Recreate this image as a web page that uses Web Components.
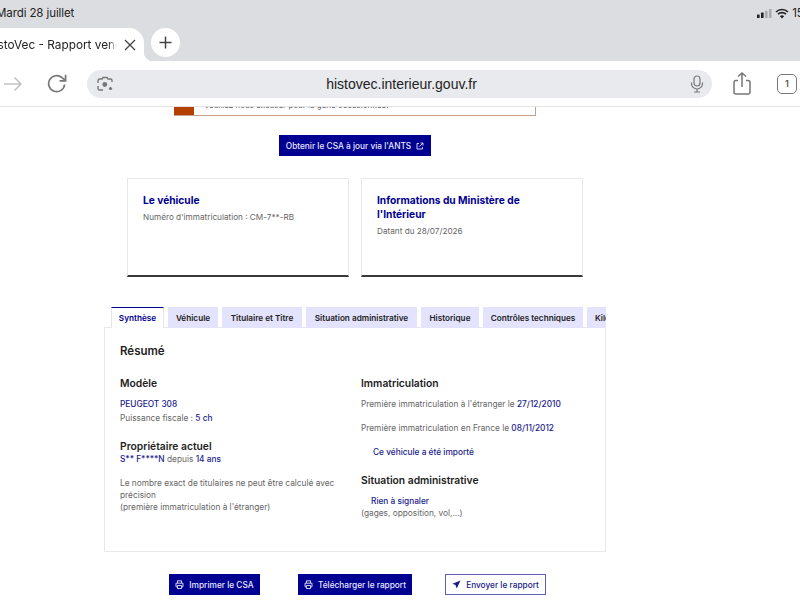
<!DOCTYPE html>
<html lang="fr">
<head>
<meta charset="utf-8">
<title>HistoVec - Rapport vendeur</title>
<style>
  html, body { margin: 0; height: 100%; overflow: hidden; background: #fff; }
  body { font-family: Inter, "Noto Sans", sans-serif; width: 800px; height: 600px; }
  main { width: 710px; display: flex; flex-direction: column; align-items: center; }
  .cards { display: flex; gap: 12px; margin-top: 22px; }
</style>
</head>
<body>
<browser-chrome></browser-chrome>
<main>
  <alert-box>Veuillez nous excuser pour la gêne occasionnée.</alert-box>
  <action-button icon="external" style="margin-top:19px">Obtenir le CSA à jour via l'ANTS</action-button>
  <div class="cards">
    <info-card heading="Le véhicule">Numéro d'immatriculation : CM-7**-RB</info-card>
    <info-card heading="Informations du Ministère de l'Intérieur">Datant du 28/07/2026</info-card>
  </div>
  <report-tabs></report-tabs>
  <report-actions></report-actions>
</main>

<script>
class BrowserChrome extends HTMLElement {
    constructor() {
        super();
        this.attachShadow({ mode: 'open' });
    }

    connectedCallback() {
        this.shadowRoot.innerHTML = `
        <style>
            :host { display: block; position: relative; z-index: 2; background: #fff; border-bottom: 1px solid #e4e4e6; color: #222; }
            .top { background: #dcdde1; height: 61px; overflow: hidden; }
            .status { height: 28px; display: flex; align-items: center; justify-content: space-between; font-size: 11.500px; letter-spacing: -.1px; margin: 0 -21px 0 -4px; padding-bottom: 2px; box-sizing: border-box; }
            .status-right { display: flex; align-items: center; gap: 3px; }
            .tabs { display: flex; align-items: flex-start; gap: 7px; height: 33px; }
            .tab { position: relative; width: 164px; margin-left: -20px; height: 33px; background: #fff; border-top-right-radius: 15px; display: flex; align-items: center; padding: 0 8px 0 6px; box-sizing: border-box; font-size: 11.800px; }
            .tab::after { content: ""; position: absolute; left: 100%; bottom: 0; width: 9px; height: 9px; background: radial-gradient(circle at 100% 0, transparent 9px, #fff 9.500px); }
            .tab-title { flex: 1; white-space: nowrap; overflow: hidden; margin-right: 7px; -webkit-mask-image: linear-gradient(to left, transparent 0, #000 9px); }
            .plus { width: 29px; height: 29px; border-radius: 50%; background: #fff; display: flex; align-items: center; justify-content: center; }
            .bar { height: 45px; display: flex; align-items: center; }
            .icon-slot { display: flex; align-items: center; justify-content: center; }
            .url { width: 625px; height: 28px; border-radius: 14px; background: #e9eaee; display: flex; align-items: center; justify-content: space-between; padding: 0 8px 0 10px; box-sizing: border-box; font-family: "Liberation Sans", sans-serif; font-size: 14px; margin-left: 13px; margin-right: 15px; }
        </style>
        <div class="top">
            <div class="status">
                <span>Mardi 28 juillet</span>
                <span class="status-right">
                    <svg width="15" height="9" viewBox="0 0 17 10"><rect x="0" y="6" width="3" height="4" rx=".6" fill="#222"/><rect x="4.500" y="4" width="3" height="6" rx=".6" fill="#222"/><rect x="9" y="2" width="3" height="8" rx=".6" fill="#aaa"/><rect x="13.500" y="0" width="3" height="10" rx=".6" fill="#aaa"/></svg>
                    <svg width="14" height="11" viewBox="0 0 14 11"><path d="M1 4a8.600 8.600 0 0 1 12 0M3 6.200a5.800 5.800 0 0 1 8 0" fill="none" stroke="#222" stroke-width="1.600"/><path d="M7 10.600 4.900 8.300a3 3 0 0 1 4.200 0z" fill="#222"/></svg>
                    <span>15:02</span>
                </span>
            </div>
            <div class="tabs">
                <div class="tab">
                    <div class="tab-title">HistoVec - Rapport vendeur</div>
                    <svg width="12" height="12" viewBox="0 0 12 12"><path d="M1 1l10 10M11 1 1 11" stroke="#444" stroke-width="1.300" fill="none"/></svg>
                </div>
                <div class="plus">
                    <svg width="13" height="13" viewBox="0 0 13 13"><path d="M6.500 .5v12M.5 6.500h12" stroke="#444" stroke-width="1.500" fill="none"/></svg>
                </div>
            </div>
        </div>
        <div class="bar">
            <div class="icon-slot" style="width:26px;margin-right:14px">
                <svg width="20" height="16" viewBox="0 0 20 16"><path d="M1 8h17M11.500 1.500 18 8l-6.500 6.500" fill="none" stroke="#c2c2c4" stroke-width="1.500"/></svg>
            </div>
            <div class="icon-slot" style="width:34px">
                <svg width="20" height="20" viewBox="0 0 20 20"><path d="M17.600 10.500A8 8 0 1 1 15 3.700L18 6" fill="none" stroke="#777" stroke-width="1.700"/><path d="M18.600 .8v6h-6" fill="none" stroke="#777" stroke-width="1.700"/></svg>
            </div>
            <div class="url">
                <svg width="16" height="16" viewBox="0 0 16 16"><path d="M1 7V4.500A1.500 1.500 0 0 1 2.500 3H5l1-1.500h4L11 3h2.500A1.500 1.500 0 0 1 15 4.500V6M1 10v2.500A1.500 1.500 0 0 0 2.500 14H6" fill="none" stroke="#777" stroke-width="1.400"/><circle cx="7.800" cy="8.500" r="2.400" fill="#777"/><circle cx="13.500" cy="12.500" r="1.600" fill="#777"/></svg>
                <span>histovec.interieur.gouv.fr</span>
                <svg width="14" height="18" viewBox="0 0 14 18"><rect x="4" y="1" width="6" height="10" rx="3" fill="none" stroke="#777" stroke-width="1.200"/><path d="M1.500 7.500v1a5.500 5.500 0 0 0 11 0v-1M7 14v3M4 17h6" fill="none" stroke="#777" stroke-width="1.200"/></svg>
            </div>
            <div class="icon-slot" style="width:30px;margin-right:20px">
                <svg width="18" height="23" viewBox="0 0 18 23"><path d="M5 8.500H3a2 2 0 0 0-2 2V20a2 2 0 0 0 2 2h12a2 2 0 0 0 2-2v-9.500a2 2 0 0 0-2-2h-2M9 15V1M5 4.500 9 1l4 3.500" fill="none" stroke="#777" stroke-width="1.500"/></svg>
            </div>
            <div class="icon-slot" style="width:20px;height:20px;border:1.500px solid #777;border-radius:5px;font-size:9px;font-weight:600;color:#555;box-sizing:border-box">1</div>
        </div>`;
    }
}

class AlertBox extends HTMLElement {
    constructor() {
        super();
        this.attachShadow({ mode: 'open' });
    }

    connectedCallback() {
        this.shadowRoot.innerHTML = `
        <style>
            :host { display: flex; width: 362px; height: 25px; margin-top: -16px; box-sizing: border-box; border: 1px solid #c9a08e; border-left: 0; }
            .bar { width: 20px; background: #b34000; flex: none; }
            .text { padding: 6px 0 0 10px; font-size: 8px; line-height: 14px; color: #555; white-space: nowrap; }
        </style>
        <div class="bar"></div>
        <div class="text"><slot></slot></div>`;
    }
}

// Bouton plein ou bordé, avec une petite icône
const BUTTON_ICONS = {
    external: `<svg width="8" height="8" viewBox="0 0 8 8"><path d="M3 1.500H1v5.500h5.500V5M4.500 1h2.500v2.500M7 1 3.500 4.500" fill="none" stroke="currentColor" stroke-width=".9"/></svg>`,
    print: `<svg width="9" height="9" viewBox="0 0 9 9"><path d="M2.500 3V.8h4V3M2.500 6.800H1V3.200h7v3.600H6.500M2.500 5.500h4v3h-4z" fill="none" stroke="currentColor" stroke-width=".9"/></svg>`,
    send: `<svg width="9" height="9" viewBox="0 0 9 9"><path d="M8.500 .5 .5 3.800l3 1.300L8.500 .5 4.700 8.500 3.500 5.100z" fill="currentColor"/></svg>`
};

class ActionButton extends HTMLElement {
    constructor() {
        super();
        this.attachShadow({ mode: 'open' });
    }

    connectedCallback() {
        const icon = BUTTON_ICONS[this.getAttribute('icon')];
        const before = this.getAttribute('icon') != 'external';
        this.shadowRoot.innerHTML = `
        <style>
            :host { display: inline-flex; flex: none; align-items: center; justify-content: center; gap: 5px; height: 21px; box-sizing: border-box; background: #000091; color: #e8e8ff; font-size: 8.300px; font-weight: 500; white-space: nowrap; }
            :host([outline]) { background: #fff; color: #1a1a8c; border: 1px solid #5f5fb0; }
            svg { display: block; flex: none; }
        </style>
        ${before ? icon : ''}<span><slot></slot></span>${before ? '' : icon}`;
        this.style.width = (this.getAttribute('w') || 152) + 'px';
    }
}

class InfoCard extends HTMLElement {
    constructor() {
        super();
        this.attachShadow({ mode: 'open' });
    }

    connectedCallback() {
        this.shadowRoot.innerHTML = `
        <style>
            :host { display: block; width: 222px; height: 99px; box-sizing: border-box; border: 1px solid #e8e8e8; border-bottom: 2px solid #3a3a3a; padding: 14px 15px 0; }
            h3 { margin: 0; font-size: 10.200px; line-height: 14px; font-weight: 700; color: #000091; }
            p { margin: 4px 0 0; font-size: 8.200px; line-height: 12px; color: #666; }
        </style>
        <h3>${this.getAttribute('heading')}</h3>
        <p><slot></slot></p>`;
    }
}

class ReportTabs extends HTMLElement {
    constructor() {
        super();
        this.attachShadow({ mode: 'open' });
    }

    connectedCallback() {
        const labels = ['Synthèse', 'Véhicule', 'Titulaire et Titre', 'Situation administrative', 'Historique', 'Contrôles techniques', 'Kilométrage'];
        const widths = [53, 50, 80, 111, 58, 100, 60];
        const tabs = labels.map((label, i) =>
            `<div class="tab ${i == 0 ? 'active' : ''}" style="flex-basis:${widths[i]}px">${label}</div>`).join('');
        this.shadowRoot.innerHTML = `
        <style>
            :host { display: block; width: 502px; margin-top: 30px; }
            .list { display: flex; gap: 4px; height: 21px; padding-left: 7px; overflow: hidden; position: relative; z-index: 1; margin-bottom: -1px; }
            .tab { flex: none; box-sizing: border-box; display: flex; align-items: center; justify-content: center; background: #e3e3fd; color: #222; font-size: 8.200px; font-weight: 600; white-space: nowrap; overflow: hidden; }
            .tab:last-child { justify-content: flex-start; padding-left: 8px; }
            .tab.active { background: #fff; color: #000091; border-top: 1px solid #000091; border-left: 1px solid #e5e5e5; border-right: 1px solid #e5e5e5; }
            .panel { box-sizing: border-box; height: 225px; border: 1px solid #e8e8e8; padding: 16px 15px 0; color: #666; font-size: 8.300px; line-height: 12px; }
            h2 { margin: 0; font-size: 11.500px; line-height: 15px; font-weight: 600; color: #1e1e1e; }
            h4 { margin: 0; font-size: 10.300px; line-height: 14px; font-weight: 600; color: #1e1e1e; }
            p { margin: 0; }
            b { font-weight: 500; color: #1a1a8c; }
            .cols { display: grid; grid-template-columns: 241px 1fr; margin-top: 17px; }
        </style>
        <div class="list">${tabs}</div>
        <div class="panel">
            <h2>Résumé</h2>
            <div class="cols">
                <div>
                    <h4>Modèle</h4>
                    <p style="margin-top:8px"><b>PEUGEOT 308</b></p>
                    <p style="margin-top:2px">Puissance fiscale : <b>5 ch</b></p>
                    <h4 style="margin-top:15px">Propriétaire actuel</h4>
                    <p><b>S** F****N</b> depuis <b>14 ans</b></p>
                    <p style="margin-top:12px;width:222px">Le nombre exact de titulaires ne peut être calculé avec précision<br>(première immatriculation à l'étranger)</p>
                </div>
                <div>
                    <h4>Immatriculation</h4>
                    <p style="margin-top:8px">Première immatriculation à l'étranger le <b>27/12/2010</b></p>
                    <p style="margin-top:12px">Première immatriculation en France le <b>08/11/2012</b></p>
                    <p style="margin-top:12px;padding-left:12px"><b>Ce véhicule a été importé</b></p>
                    <h4 style="margin-top:15px">Situation administrative</h4>
                    <p style="margin-top:8px;padding-left:10px"><b>Rien à signaler</b></p>
                    <p>(gages, opposition, vol,...)</p>
                </div>
            </div>
        </div>`;
    }
}

class ReportActions extends HTMLElement {
    constructor() {
        super();
        this.attachShadow({ mode: 'open' });
    }

    connectedCallback() {
        this.shadowRoot.innerHTML = `
        <style>
            :host { display: flex; align-self: flex-start; margin: 22px 0 0 169px; }
        </style>
        <action-button icon="print" w="91">Imprimer le CSA</action-button>
        <action-button icon="print" w="114" style="margin-left:38px">Télécharger le rapport</action-button>
        <action-button icon="send" w="101" style="margin-left:33px" outline>Envoyer le rapport</action-button>`;
    }
}

window.customElements.define('browser-chrome', BrowserChrome);
window.customElements.define('alert-box', AlertBox);
window.customElements.define('action-button', ActionButton);
window.customElements.define('info-card', InfoCard);
window.customElements.define('report-tabs', ReportTabs);
window.customElements.define('report-actions', ReportActions);
</script>
</body>
</html>
